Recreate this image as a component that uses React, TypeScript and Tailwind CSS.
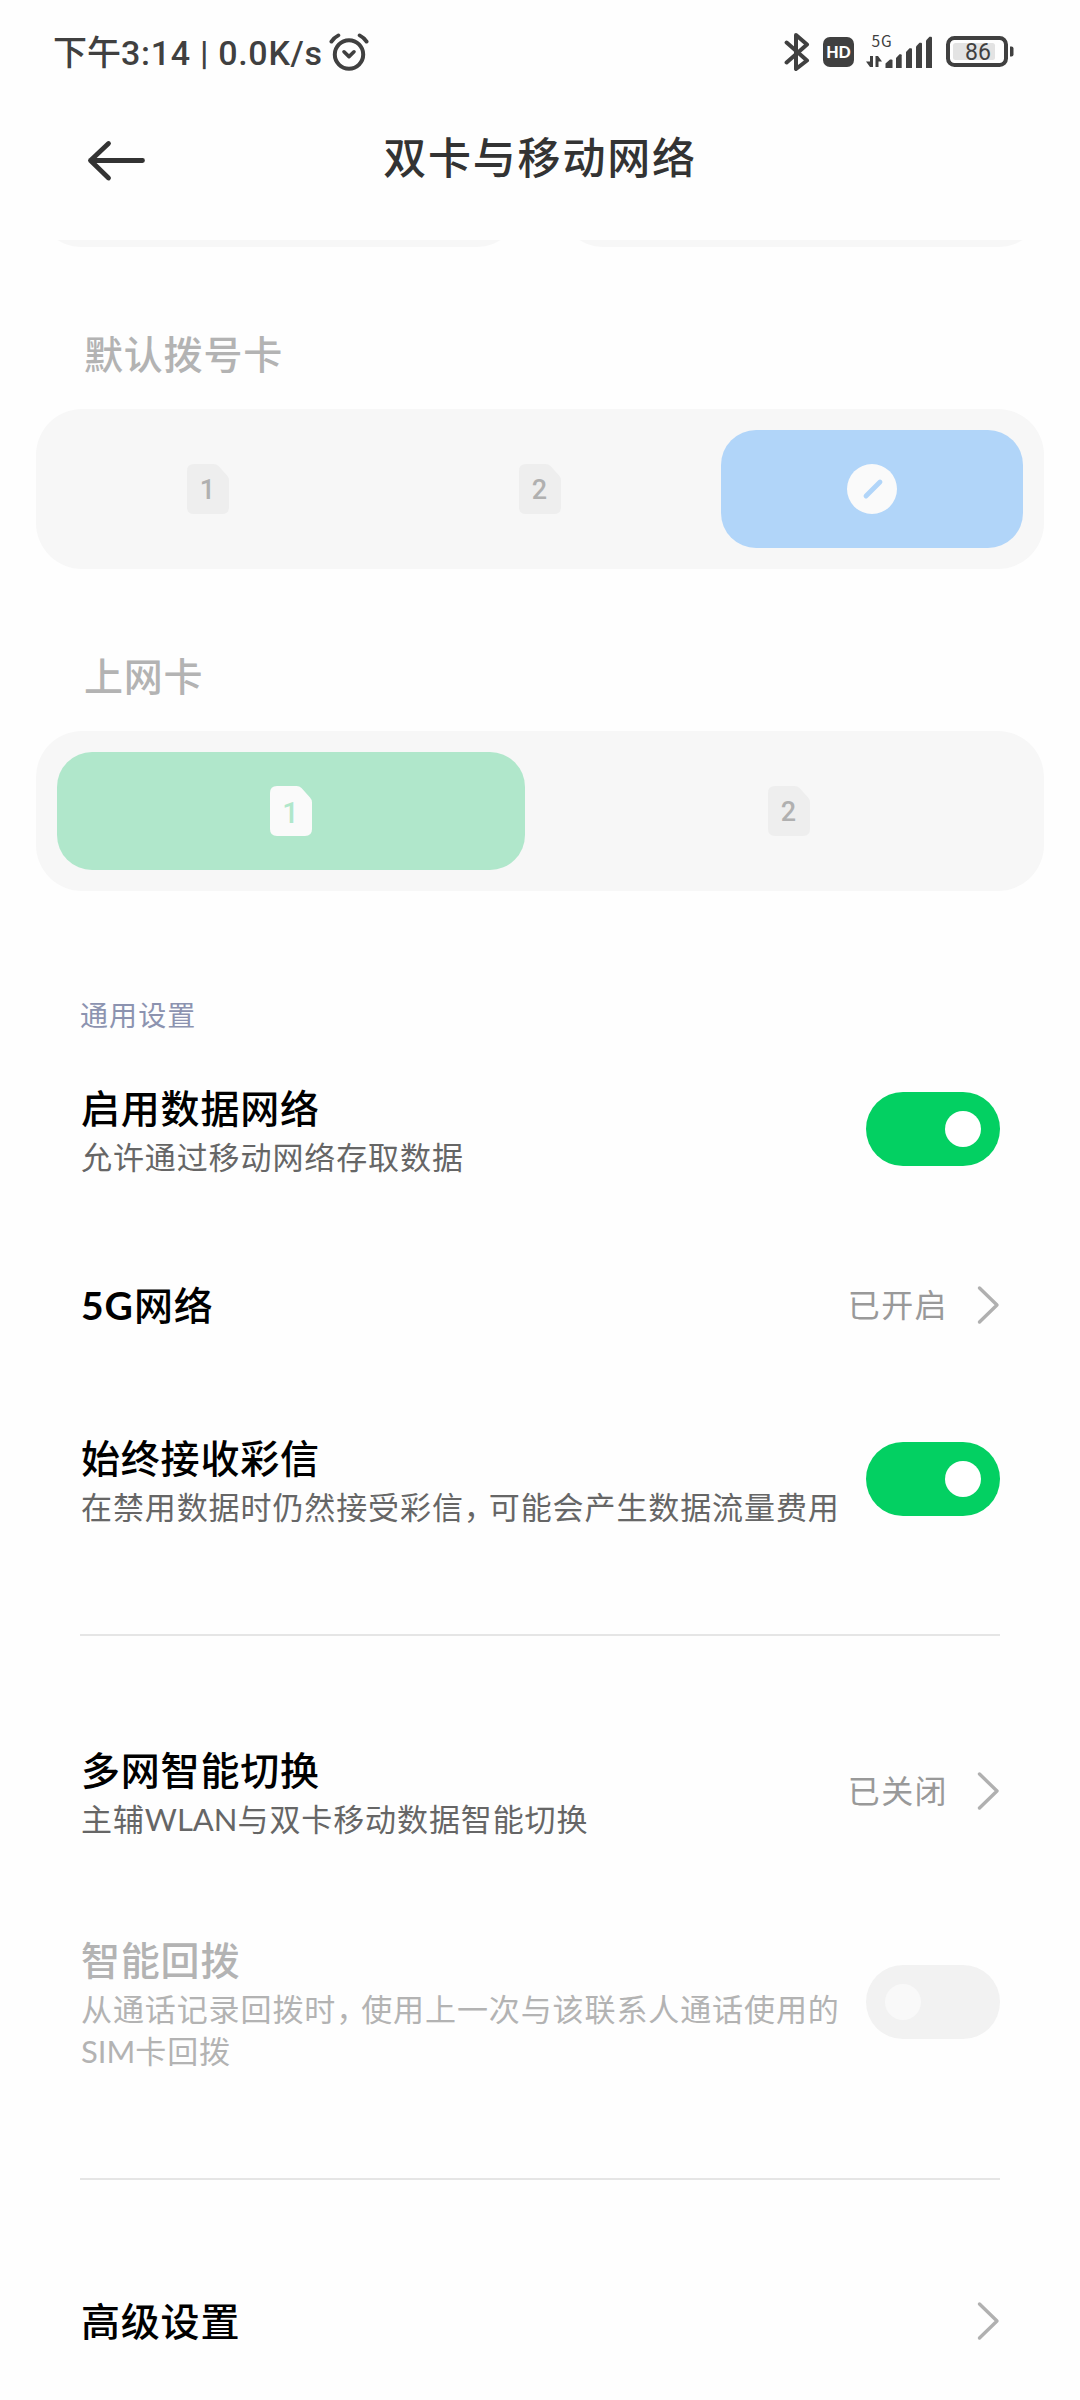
import React from "react";
import clsx from "clsx";

const AlarmIcon = () => (
  <svg width="40" height="38" viewBox="0 0 40 38" fill="none" stroke="#404040" strokeLinecap="round">
    <circle cx="20" cy="21.5" r="14.2" strokeWidth="4" />
    <path d="M15 18.8l5 4.8 5-4.8" strokeWidth="3.6" strokeLinejoin="round" />
    <path d="M2.4 8.6Q5 4.6 9.4 2.4M37.6 8.6Q35 4.6 30.6 2.4" strokeWidth="3.8" />
  </svg>
);

const BluetoothIcon = () => (
  <svg width="26" height="40" viewBox="0 0 26 40" fill="none" stroke="#404040" strokeWidth="4">
    <path d="M2.6 10.5L23 28.5 12 37V3l11 9.5L2.6 30.5" strokeLinecap="round" strokeLinejoin="round" />
  </svg>
);

const SignalIcon = () => (
  <svg className="overflow-visible" width="68" height="36" viewBox="0 0 68 36" fill="#404040">
    <text x="5.5" y="12.5" fontSize="15.5" fontFamily="Noto Sans CJK SC" fontWeight="400" letterSpacing="0.8">5G</text>
    <path d="M4 22h3v11H4L0 27.6h4zM9.5 33h3v-5.4H16L12 22H9.5z" />
    <path d="M19.5 29.5l4.5-4h1.5a1 1 0 0 1 1 1V34h-7z" />
    <path d="M30 24l3.5-3.7h1.2a1 1 0 0 1 1 1V34H30z" />
    <path d="M40 18l3.5-3.7H45a1 1 0 0 1 1 1V34h-6z" />
    <path d="M50 12.5l3.5-3.7H55a1 1 0 0 1 1 1V34h-6z" />
    <path d="M60 6.5l3.5-3.7H65a1 1 0 0 1 1 1V34h-6z" />
  </svg>
);

const BatteryIcon = () => (
  <svg className="overflow-visible" width="68" height="32" viewBox="0 0 68 32">
    <rect x="2" y="2" width="58" height="27" rx="6.5" fill="none" stroke="#404040" strokeWidth="4" />
    <rect x="7" y="7" width="42" height="17" rx="2.5" fill="#e3e3e3" />
    <path d="M64 10.5h1.5a2 2 0 0 1 2 2v6a2 2 0 0 1-2 2H64z" fill="#404040" />
    <text x="32" y="24" textAnchor="middle" fontSize="23" fontFamily="Roboto" fontWeight="400" fill="#404040">
      86
    </text>
  </svg>
);

const StatusBar = () => (
  <div className="flex h-[104px] flex-row items-center justify-between pl-[53px] pr-[66px] text-[#404040]">
    <div className="flex flex-row items-center">
      <p className="mt-[3px] w-[276px] whitespace-nowrap font-[Roboto,'Noto_Sans_CJK_SC'] text-[34px] font-medium">
        下午<span className="tracking-[0.7px]">3:14 | 0.0K/s</span>
      </p>
      <AlarmIcon />
    </div>
    <div className="flex flex-row items-center">
      <BluetoothIcon />
      <div className="ml-[13px] flex h-[30px] w-[31px] items-center justify-center rounded-[7px] bg-[#404040] font-[Lato] text-[16px] font-black text-white">
        HD
      </div>
      <div className="ml-[12px]">
        <SignalIcon />
      </div>
      <div className="ml-[12px]">
        <BatteryIcon />
      </div>
    </div>
  </div>
);

const Header = () => (
  <div className="grid h-[136px] grid-cols-[1fr_auto_1fr] items-start">
    <svg className="ml-[86px] mt-[36px]" width="62" height="42" viewBox="0 0 62 42" fill="none">
      <path d="M22.5 3.5L4.5 20.5l18 17.5M4.5 20.5H56.5" stroke="#333" strokeWidth="4.8" strokeLinecap="round" strokeLinejoin="round" />
    </svg>
    <h1 className="mt-[22px] text-[43px] font-medium leading-[64px] tracking-[1.8px] text-[#333]">双卡与移动网络</h1>
  </div>
);

type SimProps = { label: string; active?: boolean };

const SimIcon = ({ label, active }: SimProps) => (
  <svg width="42" height="50" viewBox="0 0 42 50">
    <path
      d="M7 0H26.5Q29.5 0 31.5 2L40 11.5Q42 13.5 42 16.5V43Q42 50 35 50H7Q0 50 0 43V7Q0 0 7 0z"
      fill={active ? "#fafafa" : "#eeeeee"}
    />
    <text
      x="20.5"
      y={active ? "37" : "34.5"}
      textAnchor="middle"
      fontSize={active ? "29" : "27"}
      fontFamily="Roboto"
      fontWeight="500"
      fill={active ? "#b0e7cb" : "#b0b0b0"}
    >
      {label}
    </text>
  </svg>
);

const NoneIcon = () => (
  <svg width="50" height="50" viewBox="0 0 50 50">
    <circle cx="25" cy="25" r="25" fill="#fafafa" />
    <path d="M19 32l14-14" stroke="#b1d5f9" strokeWidth="4.8" strokeLinecap="round" />
  </svg>
);

type PickerProps = { title: string; children: React.ReactNode };

const Picker = ({ title, children }: PickerProps) => (
  <div className="flex flex-col px-9">
    <p className="pl-[48px] text-[39px] font-medium leading-[60px] tracking-[0.8px] text-[#b3b3b3]">{title}</p>
    <div className="mt-[25px] flex h-[160px] flex-row gap-[30px] rounded-[46px] bg-[#f7f7f7] p-[21px]">{children}</div>
  </div>
);

const Option = ({ className, children }: { className?: string; children: React.ReactNode }) => (
  <div className={clsx("flex flex-1 items-center justify-center rounded-[35px]", className)}>{children}</div>
);

const Switch = ({ on, disabled }: { on?: boolean; disabled?: boolean }) => (
  <div
    className={clsx(
      "flex h-[74px] w-[134px] shrink-0 items-center rounded-full px-[19px]",
      on ? "justify-end bg-[#03d062]" : "justify-start bg-[#f2f2f2]"
    )}
  >
    <div className={clsx("size-9 rounded-full", disabled ? "bg-[#f9f9f9]" : "bg-white")} />
  </div>
);

const Arrow = () => (
  <svg width="24" height="40" viewBox="0 0 24 40" fill="none">
    <path d="M3.5 3L21 20 3.5 37" stroke="#b0b0b0" strokeWidth="3.4" strokeLinecap="round" strokeLinejoin="round" />
  </svg>
);

type RowProps = {
  className: string;
  title: React.ReactNode;
  desc?: React.ReactNode;
  value?: string;
  disabled?: boolean;
  children: React.ReactNode;
};

const Row = ({ className, title, desc, value, disabled, children }: RowProps) => (
  <div className={clsx("flex flex-row items-center justify-between px-20", className)}>
    <div className={clsx("mb-[1px] flex flex-col pl-[1px]", disabled && "text-[#b3b3b3]")}>
      <p className={clsx("text-[39px] font-medium leading-[56px] tracking-[0.8px]", !disabled && "text-black")}>{title}</p>
      {desc && (
        <p className={clsx("whitespace-nowrap text-[31px] leading-[42px] tracking-[0.9px]", !disabled && "text-[#666]")}>
          {desc}
        </p>
      )}
    </div>
    <div className="flex flex-row items-center">
      {value && <p className="mr-[28px] text-[32px] leading-[48px] tracking-[1.4px] text-[#999]">{value}</p>}
      {children}
    </div>
  </div>
);

const Comma = () => <span className="tracking-[-6px]">，</span>;

const Divider = () => <div className="mx-20 h-[2px] bg-[#e5e5e5]" />;

const App = () => {
  return (
    <div
      lang="zh-CN"
      className="flex h-[2400px] w-[1080px] flex-col overflow-hidden bg-[#fefefe] font-[Lato,'Noto_Sans_CJK_SC',sans-serif]"
    >
      <StatusBar />
      <Header />

      {/* bottom edge of the SIM cards scrolled under the header */}
      <div className="flex h-[7px] flex-row items-end justify-between overflow-hidden px-[35px]">
        <div className="h-[100px] w-[488px] shrink-0 rounded-[47px] bg-[#f7f7f7]" />
        <div className="h-[100px] w-[488px] shrink-0 rounded-[47px] bg-[#f7f7f7]" />
      </div>

      <div className="mt-[77px]">
        <Picker title="默认拨号卡">
          <Option>
            <SimIcon label="1" />
          </Option>
          <Option>
            <SimIcon label="2" />
          </Option>
          <Option className="bg-[#b1d5f9]">
            <NoneIcon />
          </Option>
        </Picker>
      </div>
      <div className="mt-[77px]">
        <Picker title="上网卡">
          <Option className="bg-[#b0e7cb]">
            <SimIcon label="1" active />
          </Option>
          <Option>
            <SimIcon label="2" />
          </Option>
        </Picker>
      </div>

      <p className="mt-[104px] pl-[80px] text-[28px] leading-[40px] tracking-[1.1px] text-[#8c93b0]">通用设置</p>

      <Row className="mt-[33px] h-[122px]" title="启用数据网络" desc="允许通过移动网络存取数据">
        <Switch on />
      </Row>
      <Row
        className="mt-[75px] h-[80px]"
        title={<><span className="font-bold tracking-[1px]">5G</span>网络</>}
        value="已开启"
      >
        <Arrow />
      </Row>
      <Row
        className="mt-[73px] h-[122px]"
        title="始终接收彩信"
        desc={<>在禁用数据时仍然接受彩信<Comma />可能会产生数据流量费用</>}
      >
        <Switch on />
      </Row>

      <div className="mt-[94px]">
        <Divider />
      </div>

      <Row
        className="mt-[94px] h-[122px]"
        title="多网智能切换"
        desc={<>主辅<span className="tracking-normal">WLAN</span>与双卡移动数据智能切换</>}
        value="已关闭"
      >
        <Arrow />
      </Row>
      <Row
        className="mt-[69px] h-[162px]"
        title="智能回拨"
        desc={
          <>
            从通话记录回拨时<Comma />使用上一次与该联系人通话使用的
            <br />
            <span className="tracking-normal">SIM</span>卡回拨
          </>
        }
        disabled
      >
        <Switch disabled />
      </Row>

      <div className="mt-[95px]">
        <Divider />
      </div>

      <Row className="mt-[101px] h-[80px]" title="高级设置">
        <Arrow />
      </Row>
    </div>
  );
};

export default App;
